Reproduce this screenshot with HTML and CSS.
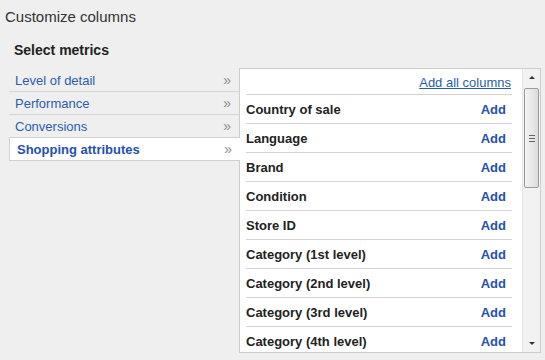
FILE: index.html
```html
<!DOCTYPE html>
<html lang="en">

<head>
    <meta charset="UTF-8">
    <title>Customize columns</title>
    <link rel="stylesheet" href="styles.css">
</head>

<body>
    <h1 class="title">Customize columns</h1>
    <h2 class="subtitle">Select metrics</h2>

    <div class="picker">
        <ul class="groups">
            <li class="group"><span>Level of detail</span><i>&raquo;</i></li>
            <li class="group"><span>Performance</span><i>&raquo;</i></li>
            <li class="group"><span>Conversions</span><i>&raquo;</i></li>
            <li class="group active"><span>Shopping attributes</span><i>&raquo;</i></li>
        </ul>

        <div class="panel">
            <div class="list">
                <div class="list-head"><a href="#">Add all columns</a></div>
                <div class="row"><span>Country of sale</span><a href="#">Add</a></div>
                <div class="row"><span>Language</span><a href="#">Add</a></div>
                <div class="row"><span>Brand</span><a href="#">Add</a></div>
                <div class="row"><span>Condition</span><a href="#">Add</a></div>
                <div class="row"><span>Store ID</span><a href="#">Add</a></div>
                <div class="row"><span>Category (1st level)</span><a href="#">Add</a></div>
                <div class="row"><span>Category (2nd level)</span><a href="#">Add</a></div>
                <div class="row"><span>Category (3rd level)</span><a href="#">Add</a></div>
                <div class="row"><span>Category (4th level)</span><a href="#">Add</a></div>
            </div>

            <div class="scrollbar">
                <div class="sb-btn"><b class="up"></b></div>
                <div class="sb-track">
                    <div class="sb-thumb"><em></em></div>
                </div>
                <div class="sb-btn"><b class="down"></b></div>
            </div>
        </div>
    </div>
</body>

</html>
```

FILE: styles.css
```css
body {
    margin: 0;
    background: #efefef;
    font-family: "Liberation Sans", Arial, sans-serif;
    color: #222;
}

.title {
    margin: 0;
    padding: 7px 0 0 5px;
    font-size: 15px;
    font-weight: normal;
    line-height: 20px;
    color: #333;
}

.subtitle {
    margin: 0;
    padding: 15px 0 0 14px;
    font-size: 14px;
    font-weight: bold;
    line-height: 17px;
}

.picker {
    display: flex;
    align-items: flex-start;
    padding: 9px 0 0 9px;
}

.groups {
    list-style: none;
    margin: 0;
    padding: 1px 0 0;
    width: 230px;
    position: relative;
    z-index: 1;
}

.group {
    display: flex;
    justify-content: space-between;
    align-items: center;
    height: 22px;
    padding: 0 8px 0 6px;
    border-bottom: 1px solid #d6d6d6;
    font-size: 13px;
    color: #2a5db0;
}

.group i {
    font-style: normal;
    font-weight: normal;
    font-size: 14px;
    color: #8a8a8a;
}

.group.active {
    height: 22px;
    padding-left: 7px;
    background: #fff;
    border: 1px solid #d0d0d0;
    border-right: none;
    margin-right: -1px;
    margin-top: -1px;
    font-weight: bold;
    color: #2550b0;
}

.panel {
    display: flex;
    width: 300px;
    height: 283px;
    background: #fff;
    border: 1px solid #cdcdcd;
    overflow: hidden;
}

.list {
    flex: 1;
    padding: 0 10px 0 6px;
    overflow: hidden;
}

.list-head {
    height: 25px;
    text-align: right;
    border-bottom: 1px solid #d4d4d4;
    font-size: 13px;
    line-height: 28px;
}

.list-head a {
    color: #2a5db0;
    margin-right: 1px;
}

.row {
    display: flex;
    justify-content: space-between;
    align-items: center;
    height: 28px;
    padding: 0 6px 0 0;
    border-bottom: 1px solid #d4d4d4;
    font-size: 13px;
    font-weight: bold;
    color: #222;
}

.row a {
    color: #2550b0;
    text-decoration: none;
}

.scrollbar {
    display: flex;
    flex-direction: column;
    width: 17px;
    background: #f2f2f2;
    border-left: 1px solid #e6e6e6;
}

.sb-btn {
    height: 17px;
    display: flex;
    align-items: center;
    justify-content: center;
}

.sb-btn b {
    width: 0;
    height: 0;
    border-left: 3px solid transparent;
    border-right: 3px solid transparent;
}

.sb-btn .up {
    border-bottom: 3px solid #333;
}

.sb-btn .down {
    border-top: 3px solid #333;
}

.sb-track {
    flex: 1;
    padding: 2px 1px 0;
}

.sb-thumb {
    height: 98px;
    border: 1px solid #9a9a9a;
    border-radius: 2px;
    background: linear-gradient(to right, #f4f4f4, #dcdcdc);
    display: flex;
    align-items: center;
    justify-content: center;
}

.sb-thumb em {
    width: 6px;
    height: 5px;
    border-top: 1px solid #666;
    border-bottom: 1px solid #666;
    background: linear-gradient(#666, #666) center / 100% 1px no-repeat;
}
```
